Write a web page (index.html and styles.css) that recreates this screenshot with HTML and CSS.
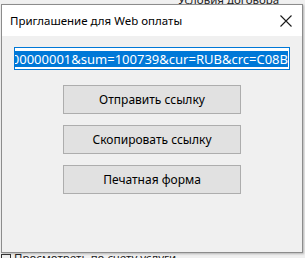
FILE: index.html
```html
<!DOCTYPE html>
<html lang="ru">
<head>
    <meta charset="utf-8">
    <link rel="stylesheet" href="styles.css">
</head>
<body>
    <div class="desk">
        <div class="behind-top">
            <span class="behind-label">Условия договора</span>
        </div>
        <div class="dialog">
            <div class="titlebar">
                <span class="title">Приглашение для Web оплаты</span>
                <svg class="close" width="12" height="12" viewBox="0 0 12 12">
                    <path d="M0.5 0.5 L11.5 11.5 M11.5 0.5 L0.5 11.5" stroke="#1a1a1a" stroke-width="1.1" fill="none"/>
                </svg>
            </div>
            <div class="content">
                <div class="link-box">
                    <span class="link-text">https://pay.example.ru/invite?inv=1000000001&amp;sum=100739&amp;cur=RUB&amp;crc=C08B</span>
                </div>
                <div class="buttons">
                    <button type="button" class="btn">Отправить ссылку</button>
                    <button type="button" class="btn">Скопировать ссылку</button>
                    <button type="button" class="btn">Печатная форма</button>
                </div>
            </div>
        </div>
        <div class="behind-bottom">
            <span class="check"></span>
            <span class="behind-label">Просмотреть по счету услуги</span>
        </div>
    </div>
</body>
</html>
```

FILE: styles.css
```css
/* desktop behind the dialog */
body {
    margin: 0;
    background-color: #f0f0f0;
    font-family: "Noto Sans", "Open Sans", sans-serif;
}

.desk {
    width: 305px;
    height: 258px;
    overflow: hidden;
}

.behind-top {
    height: 4px;
    overflow: hidden;
    display: flex;
    padding-left: 178px;
}

.behind-top .behind-label {
    margin-top: -7px;
    font-size: 11.5px;
    line-height: 14px;
    white-space: nowrap;
    color: #222;
}

.behind-bottom {
    height: 5px;
    overflow: hidden;
    display: flex;
    gap: 3px;
    padding-left: 1px;
}

.behind-bottom .check {
    width: 8px;
    height: 9px;
    border: 1px solid #333;
    margin-top: 1px;
}

.behind-bottom .behind-label {
    margin-top: -2px;
    font-size: 11.5px;
    line-height: 14px;
    white-space: nowrap;
    color: #222;
}

/* the dialog window */
.dialog {
    margin-left: 1px;
    width: 300px;
    height: 247px;
    border: 1px solid #8c8c8c;
    background-color: #f0f0f0;
    display: flex;
    flex-direction: column;
    box-shadow: 1px 1px 2px rgba(0, 0, 0, 0.25);
}

.titlebar {
    height: 31px;
    background-color: #fff;
    display: flex;
    align-items: center;
    justify-content: space-between;
    padding: 0 10px 0 8px;
}

.title {
    font-size: 11.5px;
    color: #000;
}

.close {
    display: block;
}

.content {
    padding: 11px 12px 0 12px;
}

.link-box {
    height: 21px;
    border: 1px solid #0078d7;
    background-color: #fff;
    display: flex;
    justify-content: flex-end;
    align-items: center;
    overflow: hidden;
    padding: 0 1px;
}

.link-text {
    white-space: nowrap;
    background-color: #0078d7;
    color: #fff;
    font-size: 13px;
    line-height: 16px;
}

.buttons {
    display: flex;
    flex-direction: column;
    align-items: center;
    gap: 11px;
    margin-top: 15px;
}

.btn {
    width: 178px;
    height: 29px;
    background-color: #e1e1e1;
    border: 1px solid #adadad;
    border-radius: 0;
    font-family: "Noto Sans", "Open Sans", sans-serif;
    font-size: 12px;
    color: #000;
    padding: 0;
}
```
